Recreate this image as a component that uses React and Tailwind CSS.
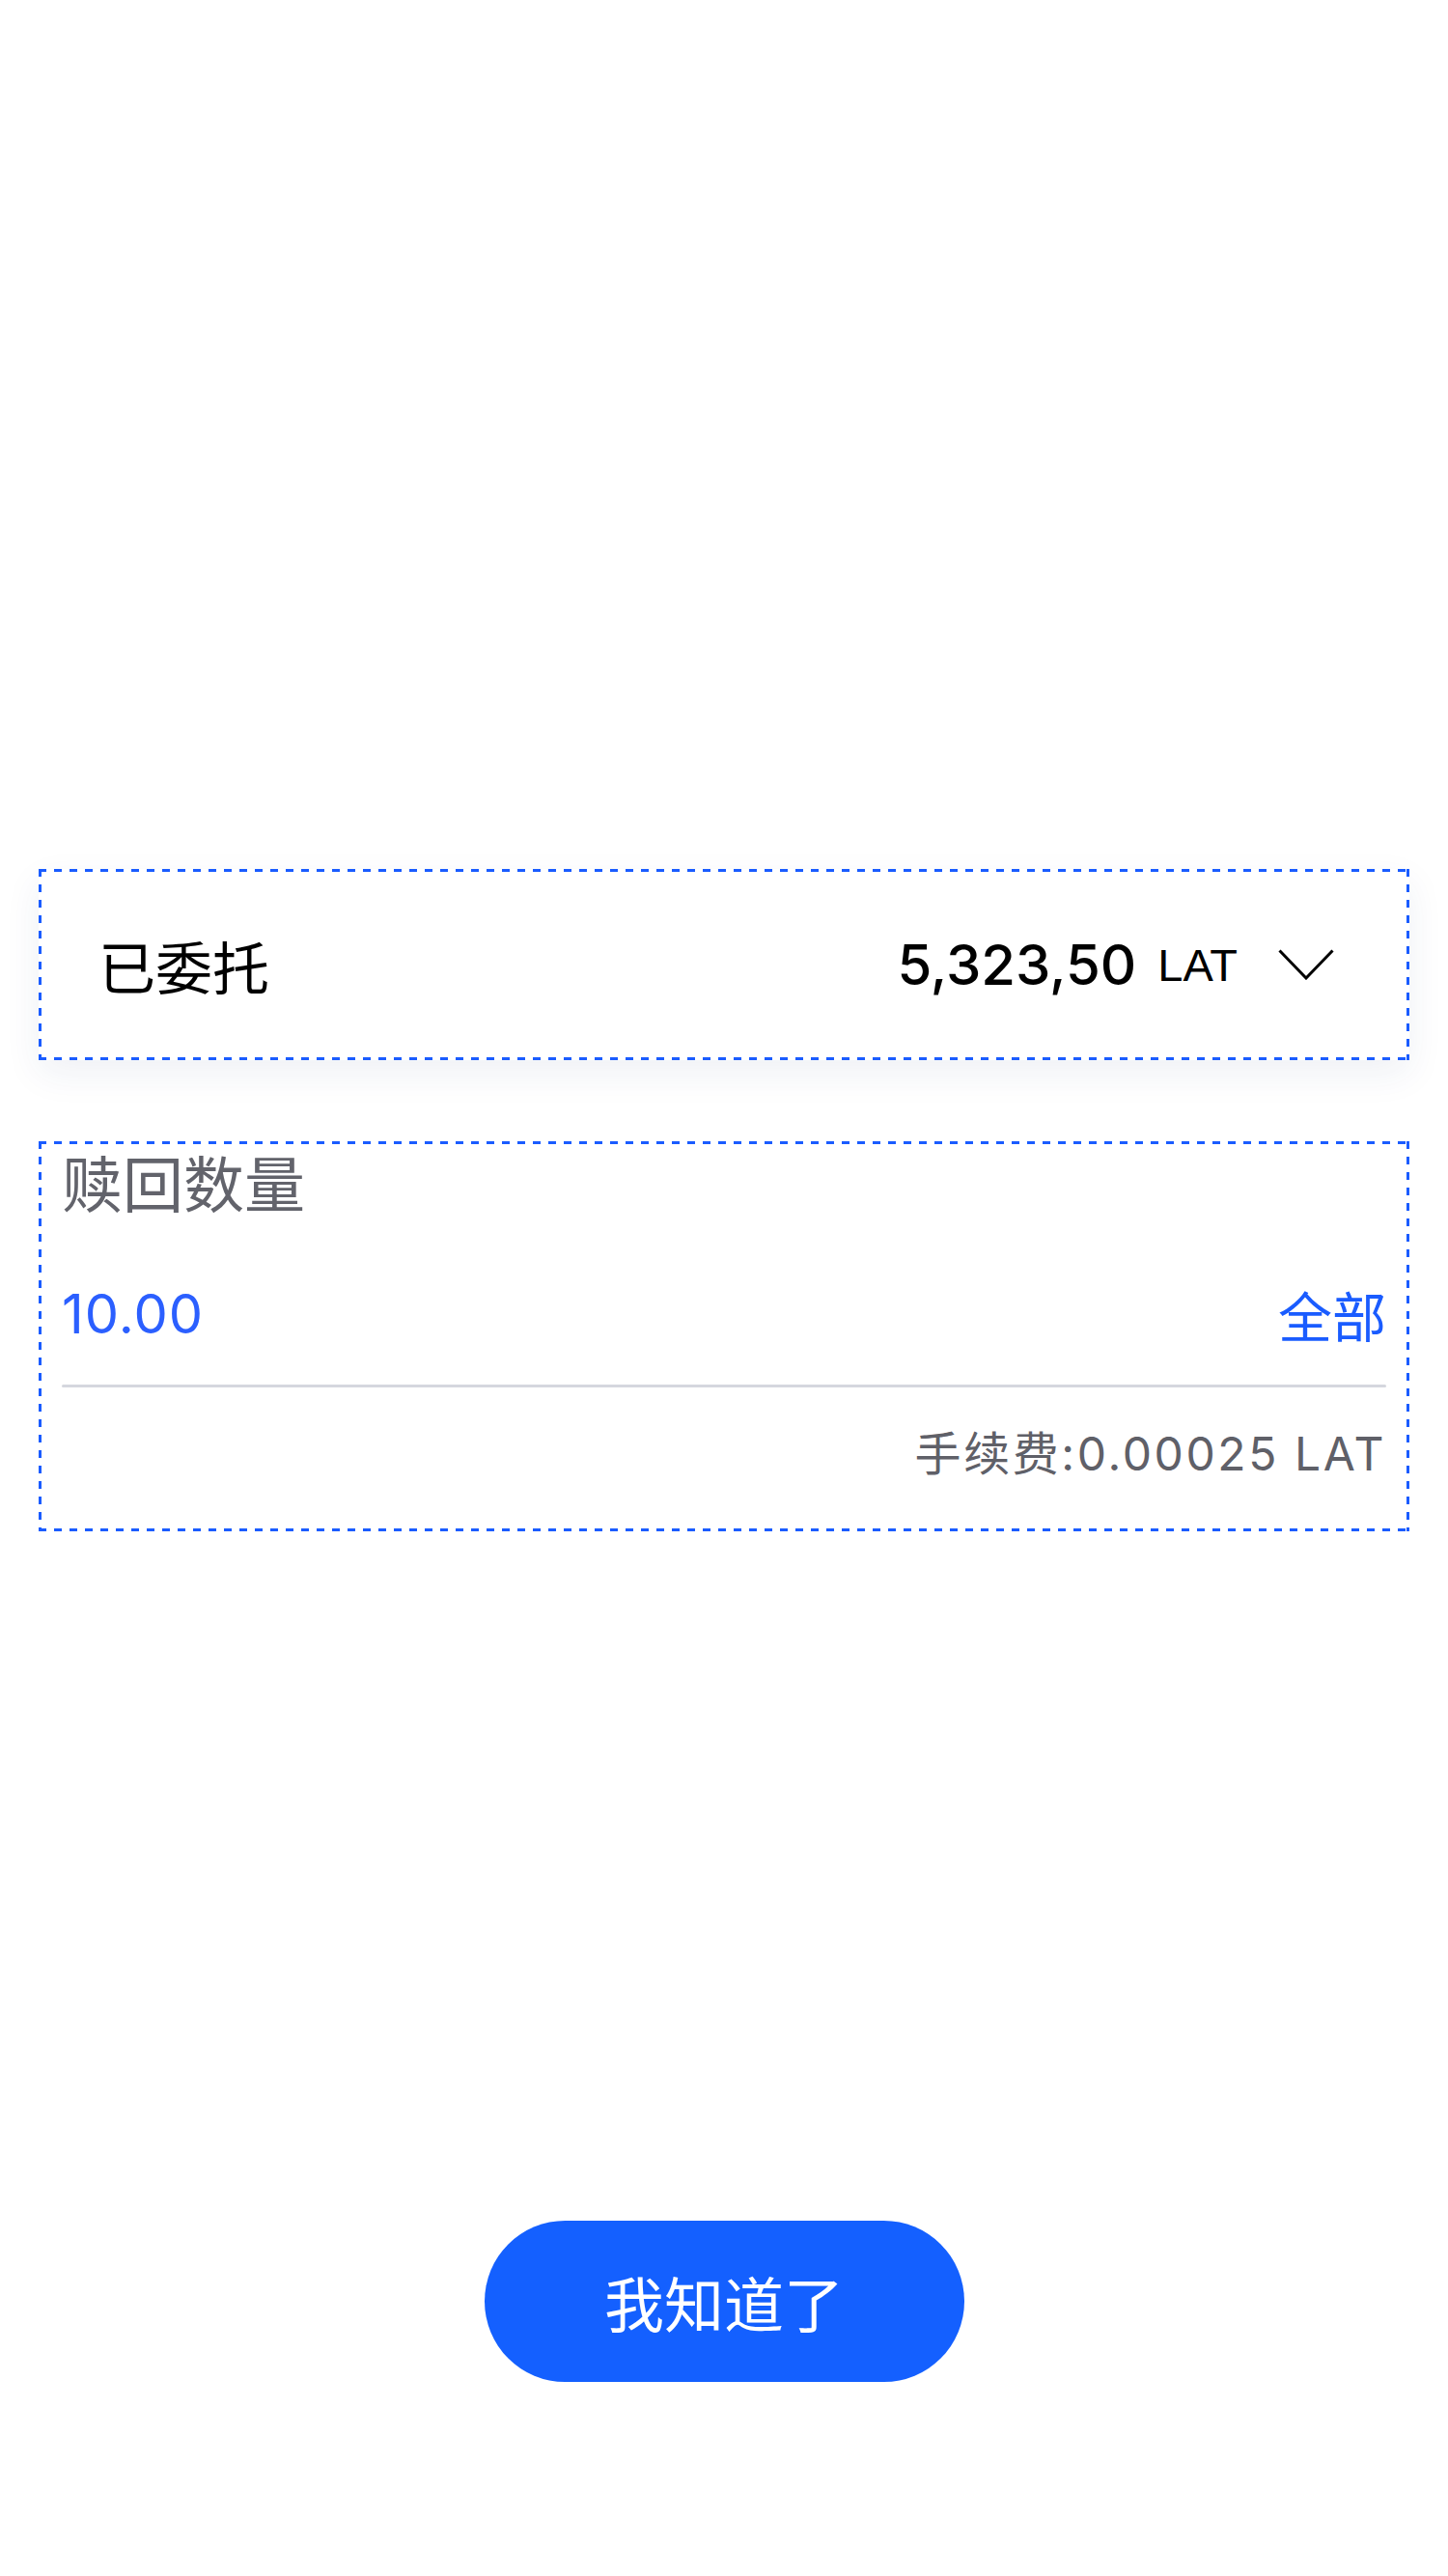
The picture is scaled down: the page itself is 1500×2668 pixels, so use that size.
const latin = "font-['Liberation_Sans','Noto_Sans_CJK_SC',sans-serif]";
const inter = "font-['Inter','Noto_Sans_CJK_SC',sans-serif]";
const cjk = "font-['Noto_Sans_CJK_SC',sans-serif]";

// dashed frame drawn with gradients so the dash/gap is exactly 8px/8px, 3px thick
const dashed =
  "bg-white bg-[linear-gradient(90deg,#1a5cff_8px,transparent_8px),linear-gradient(90deg,#1a5cff_8px,transparent_8px),linear-gradient(180deg,#1a5cff_8px,transparent_8px),linear-gradient(180deg,#1a5cff_8px,transparent_8px)] bg-[length:16px_3px,16px_3px,3px_16px,3px_16px] bg-[position:0_0,0_100%,0_0,100%_0] [background-repeat:repeat-x,repeat-x,repeat-y,repeat-y]";

export default function App() {
  return (
    <div className="min-h-[2668px] w-full bg-white px-[40px] pt-[900px]">
      {/* Delegated amount */}
      <div className={`${dashed} flex h-[198px] items-center justify-between pl-[62px] pr-[78px] shadow-[0_14px_36px_rgba(30,50,110,0.07)]`}>
        <span className={`${cjk} text-[59px] leading-none text-black`}>已委托</span>
        <div className="flex items-center">
          <span className={`${inter} text-[58px] font-medium leading-none text-black`}>5,323,50</span>
          <span className={`${latin} ml-[22px] text-[47px] leading-none text-black`}>LAT</span>
          <svg className="ml-[42px]" width="58" height="32" viewBox="0 0 58 32" fill="none">
            <path d="M1.5 1.5 L29 30 L56.5 1.5" stroke="#000" strokeWidth="3" />
          </svg>
        </div>
      </div>

      {/* Redeem amount */}
      <div className={`${dashed} mt-[84px] flex h-[404px] flex-col px-[24px] pt-[9px]`}>
        <span className={`${cjk} text-[63px] leading-none text-[#62636b]`}>赎回数量</span>
        <div className="mt-[79px] flex items-center justify-between">
          <span className={`${inter} text-[56px] leading-none tracking-[1px] text-[#2b5fff]`}>10.00</span>
          <span className={`${cjk} text-[56px] leading-none text-[#1a5cff]`}>全部</span>
        </div>
        <div className="mt-[45px] h-[3px] w-full rounded-full bg-[#d5d7de]" />
        <div className="mt-[45px] flex justify-end">
          <span className={`${inter} text-[48px] leading-none tracking-[2.6px] text-[#5f6068]`}>手续费:0.00025 LAT</span>
        </div>
      </div>

      <div className="mt-[714px] flex justify-center">
        <button className={`${cjk} flex h-[167px] w-[497px] items-center justify-center rounded-full bg-[#1460ff] text-[62px] leading-none text-white`}>
          我知道了
        </button>
      </div>
    </div>
  );
}
